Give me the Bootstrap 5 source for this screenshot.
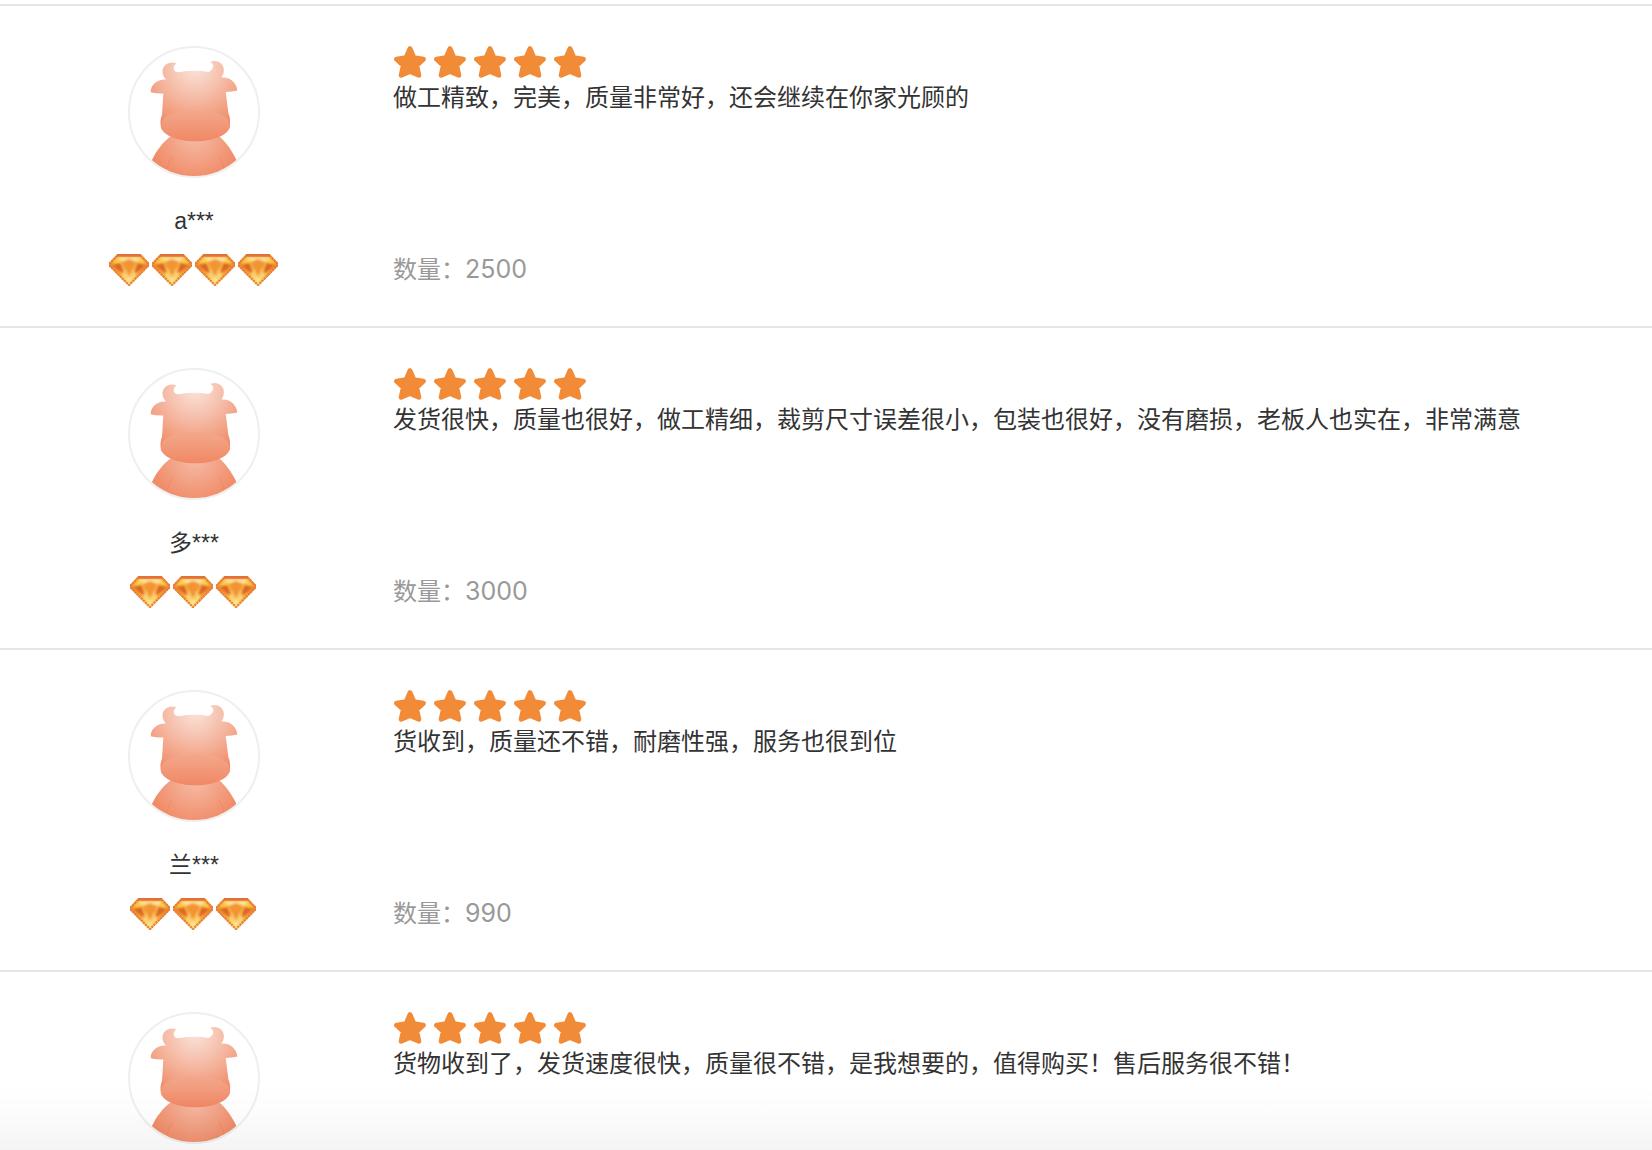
<!DOCTYPE html>
<html lang="zh-CN">
<head>
<meta charset="utf-8">
<meta name="viewport" content="width=device-width, initial-scale=1">
<title>商品评价</title>
<link href="https://cdn.jsdelivr.net/npm/bootstrap@5.3.0/dist/css/bootstrap.min.css" rel="stylesheet">
<style>
body{font-family:"Noto Sans CJK SC",sans-serif;font-size:24px;color:#333;background:#fff}
.reviews{padding-top:4px}
.review{border-top:2px solid #e5e5e5;padding:40px 0}
.buyer{width:388px}
.avatar{width:132px;height:132px}
.buyer-name{font-family:"Liberation Sans","Noto Sans CJK SC",sans-serif;font-size:23px;line-height:32px;margin:27px 0 17px}
.rank{gap:3px;padding-right:2px}
.rank svg{width:40px;height:32px}
.feedback{padding:0 32px 0 5px}
.stars{gap:8px;padding-left:1px}
.stars svg{width:32px;height:32px}
.comment{line-height:36px}
.quantity{line-height:34px;color:#999}
.quantity span{font-family:Inter,sans-serif;font-size:25px}
.fade-edge{height:64px;background:linear-gradient(rgba(0,0,0,0),rgba(0,0,0,.01) 40%,rgba(0,0,0,.045));pointer-events:none}
</style>
<script src="https://cdn.jsdelivr.net/npm/bootstrap@5.3.0/dist/js/bootstrap.bundle.min.js"></script>
</head>
<body>
<svg width="0" height="0" class="position-absolute" aria-hidden="true">
  <defs>
    <radialGradient id="gHead" gradientUnits="userSpaceOnUse" cx="67" cy="22" r="64"><stop offset="0" stop-color="#fae3da"/><stop offset=".5" stop-color="#f5b9a3"/><stop offset="1" stop-color="#f08a66"/></radialGradient>
    <linearGradient id="gMuzzle" x1="0" y1="0" x2="0" y2="1"><stop offset="0" stop-color="#f3a88c"/><stop offset="1" stop-color="#f08865"/></linearGradient>
    <radialGradient id="gBody" gradientUnits="userSpaceOnUse" cx="67" cy="90" r="46"><stop offset="0" stop-color="#f6bca7"/><stop offset="1" stop-color="#f08b67"/></radialGradient>
    <clipPath id="disc"><circle cx="66" cy="66" r="64"/></clipPath>
    <linearGradient id="gGem" x1="0" y1="0" x2="0" y2="1"><stop offset="0" stop-color="#f7a83a"/><stop offset=".4" stop-color="#ee8a2c"/><stop offset=".7" stop-color="#f8b43e"/><stop offset="1" stop-color="#fde27c"/></linearGradient>
    <filter id="soft" x="0" y="0" width="1" height="1"><feGaussianBlur stdDeviation=".9"/></filter>
    <symbol id="cow" viewBox="0 0 132 132">
      <circle cx="66" cy="66" r="65" fill="#fff" stroke="#efefef" stroke-width="2"/>
      <g clip-path="url(#disc)">
        <path fill="url(#gBody)" d="M43 90C35 96 28 105 24 114L20 132H112L108 113C104 105 98 96 91 90Z"/>
        <path fill="none" stroke="#ed835e" stroke-width="1" opacity=".6" d="M44 110Q40 116 39 123M91 110Q95 116 96 123"/>
      </g>
      <path fill="url(#gHead)" d="M48.500 17.200C41 14.500 34.500 19 34.500 25.500Q34.500 30 38 33.500C29 33 22.500 39 22.700 46.300Q29 47.800 35.300 47.500L34 69Q31.500 75 33.500 83Q44 95 67 95Q91 95 101.500 82Q103 75 100.500 68L97.700 46Q104 46 109.300 44.600C109 37 102 30.500 93.500 31.500Q96 28 95.900 24C95.500 17 89 13 82 15.900C87 18 86 23 80.500 26Q67 23.500 50.500 26.200C44.500 26 44.500 20 48.500 17.200Z"/>
      <path fill="url(#gMuzzle)" d="M32.700 79.500C32.700 70 48 64 67.300 64S102 70 102 79.500C102 88 87 95.300 67.300 95.300S32.700 88 32.700 79.500Z"/>
      <path fill="none" stroke="#ed835e" stroke-width="1.200" opacity=".4" d="M34 70Q32.500 74 33.500 79M100.500 68Q102 74 101.300 79"/>
    </symbol>
    <symbol id="star" viewBox="0 0 32 32">
      <path fill="#f28b38" stroke="#f28b38" stroke-width="5" stroke-linejoin="round" d="M16 2.700L19.800 11.600L29.400 13.200L22.700 19.400L24.800 29.200L16 25.500L7.200 29.200L9.300 19.400L2.600 13.200L12.200 11.600Z"/>
    </symbol>
    <symbol id="gem" viewBox="0 0 40 32">
      <path fill="url(#gGem)" d="M8 0H32L40 9V12L21 32H19L0 12V9Z"/>
      <g filter="url(#soft)">
        <path fill="#fde2a0" d="M9 3H31L34 6L27 8L20 5L13 8L6 7Z"/>
        <path fill="#f9cf45" d="M3 9L8 4L14 7L8 11ZM37 9L32 4L28 7L32 11Z"/>
        <path fill="#de6527" d="M4 10L12 9L17 21L8 15ZM36 10L28 9L23 21L32 15Z"/>
        <path fill="#f29432" d="M13 8L20 6L27 8L22 20H18Z"/>
        <path fill="#fff2ac" d="M13 21L16 14L20 24L24 14L27 21L20 30Z" opacity=".65"/>
        <path fill="none" stroke="#fbc24c" stroke-width="1.500" d="M12 8L18 24M28 8L22 24"/>
      </g>
      <path fill="none" stroke="#e47a45" stroke-width="2" stroke-dasharray="2 1" d="M8 2L1 9V12L20 31L39 12V9L32 2"/>
      <path fill="#e2703a" d="M8 0H32V2.500H8Z"/>
    </symbol>
  </defs>
</svg>
<main class="vh-100 overflow-hidden position-relative">
  <ul class="reviews list-unstyled mb-0">
    <li class="review d-flex">
      <div class="buyer d-flex flex-column align-items-center flex-shrink-0">
        <svg class="avatar"><use href="#cow"/></svg>
        <p class="buyer-name">a***</p>
        <div class="rank d-flex"><svg><use href="#gem"/></svg><svg><use href="#gem"/></svg><svg><use href="#gem"/></svg><svg><use href="#gem"/></svg></div>
      </div>
      <div class="feedback d-flex flex-column flex-grow-1">
        <div class="stars d-flex" role="img" aria-label="5"><svg><use href="#star"/></svg><svg><use href="#star"/></svg><svg><use href="#star"/></svg><svg><use href="#star"/></svg><svg><use href="#star"/></svg></div>
        <p class="comment mb-0">做工精致，完美，质量非常好，还会继续在你家光顾的</p>
        <p class="quantity mt-auto mb-0">数量：<span>2500</span></p>
      </div>
    </li>
    <li class="review d-flex">
      <div class="buyer d-flex flex-column align-items-center flex-shrink-0">
        <svg class="avatar"><use href="#cow"/></svg>
        <p class="buyer-name">多***</p>
        <div class="rank d-flex"><svg><use href="#gem"/></svg><svg><use href="#gem"/></svg><svg><use href="#gem"/></svg></div>
      </div>
      <div class="feedback d-flex flex-column flex-grow-1">
        <div class="stars d-flex" role="img" aria-label="5"><svg><use href="#star"/></svg><svg><use href="#star"/></svg><svg><use href="#star"/></svg><svg><use href="#star"/></svg><svg><use href="#star"/></svg></div>
        <p class="comment mb-0">发货很快，质量也很好，做工精细，裁剪尺寸误差很小，包装也很好，没有磨损，老板人也实在，非常满意</p>
        <p class="quantity mt-auto mb-0">数量：<span>3000</span></p>
      </div>
    </li>
    <li class="review d-flex">
      <div class="buyer d-flex flex-column align-items-center flex-shrink-0">
        <svg class="avatar"><use href="#cow"/></svg>
        <p class="buyer-name">兰***</p>
        <div class="rank d-flex"><svg><use href="#gem"/></svg><svg><use href="#gem"/></svg><svg><use href="#gem"/></svg></div>
      </div>
      <div class="feedback d-flex flex-column flex-grow-1">
        <div class="stars d-flex" role="img" aria-label="5"><svg><use href="#star"/></svg><svg><use href="#star"/></svg><svg><use href="#star"/></svg><svg><use href="#star"/></svg><svg><use href="#star"/></svg></div>
        <p class="comment mb-0">货收到，质量还不错，耐磨性强，服务也很到位</p>
        <p class="quantity mt-auto mb-0">数量：<span>990</span></p>
      </div>
    </li>
    <li class="review d-flex">
      <div class="buyer d-flex flex-column align-items-center flex-shrink-0">
        <svg class="avatar"><use href="#cow"/></svg>
      </div>
      <div class="feedback d-flex flex-column flex-grow-1">
        <div class="stars d-flex" role="img" aria-label="5"><svg><use href="#star"/></svg><svg><use href="#star"/></svg><svg><use href="#star"/></svg><svg><use href="#star"/></svg><svg><use href="#star"/></svg></div>
        <p class="comment mb-0">货物收到了，发货速度很快，质量很不错，是我想要的，值得购买！售后服务很不错！</p>
      </div>
    </li>
  </ul>
  <div class="fade-edge position-absolute bottom-0 start-0 w-100"></div>
</main>
</body>
</html>
